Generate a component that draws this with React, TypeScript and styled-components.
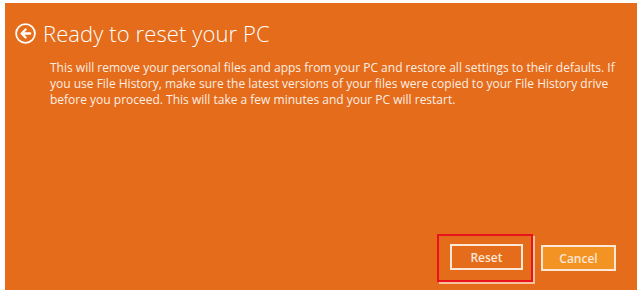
import React from 'react';
import styled, {createGlobalStyle} from "styled-components";

const GlobalStyle = createGlobalStyle`
  html, body {
    margin: 0;
    padding: 0;
    background: #ffffff;
  }
  body {
    font-family: "Open Sans", "Noto Sans", sans-serif;
  }
`

const BackIcon = () => (
    <svg width="21" height="21" viewBox="0 0 21 21">
        <circle cx="10.5" cy="10.5" r="9.4" fill="none" stroke="#fff" strokeWidth="1.8"/>
        <path d="M15.2 10.5H7M10.6 6.5L6.6 10.5L10.6 14.5" fill="none" stroke="#fff" strokeWidth="2.3"
              strokeLinecap="round" strokeLinejoin="round"/>
    </svg>
);

export default function App() {
    return (
        <Page>
            <GlobalStyle/>
            <Panel>
                <Header>
                    <BackButton><BackIcon/></BackButton>
                    <Title>Ready to reset your PC</Title>
                </Header>
                <Body>
                    This will remove your personal files and apps from your PC and restore all settings to their defaults. If
                    you use File History, make sure the latest versions of your files were copied to your File History drive
                    before you proceed. This will take a few minutes and your PC will restart.
                </Body>
                <ButtonBar>
                    <Highlight>
                        <Button>Reset</Button>
                    </Highlight>
                    <Button primary>Cancel</Button>
                </ButtonBar>
            </Panel>
        </Page>
    );
}

const Page = styled.div`
  padding: 3px 0 0 5px;
  width: 637px;
  height: 290px;
  box-sizing: border-box;
`

const Panel = styled.div`
  height: 100%;
  background: #e46c1b;
  display: flex;
  flex-direction: column;
  color: #fff;
  box-sizing: border-box;
  padding: 17px 21px 0 10px;
`

const Header = styled.div`
  display: flex;
  align-items: center;
  gap: 7px;
`

const BackButton = styled.span`
  display: flex;
  width: 21px;
  height: 21px;
`

const Title = styled.h1`
  margin: 0;
  font-weight: 300;
  font-size: 22px;
  line-height: 26px;
  letter-spacing: 0.1px;
`

const Body = styled.p`
  margin: 14px 0 0 35px;
  font-size: 12px;
  line-height: 16px;
  color: #fdeee3;
`

const ButtonBar = styled.div`
  margin-top: auto;
  display: flex;
  justify-content: flex-end;
  align-items: center;
  gap: 8px;
  padding-bottom: 8px;
`

const Highlight = styled.div`
  border: 2px solid #e8131b;
  padding: 8px 8px 10px 11px;
  box-shadow: 2px 2px 0 rgba(255, 230, 210, 0.7);
`

const Button = styled.button<{ primary?: boolean }>`
  width: ${p => p.primary ? '75px' : '73px'};
  height: 26px;
  border: 2px solid #fde7d6;
  background: ${p => p.primary ? '#f39323' : '#e46c1b'};
  color: #fde7d6;
  font-family: inherit;
  font-size: 12px;
  font-weight: 600;
  padding: 0;
`
